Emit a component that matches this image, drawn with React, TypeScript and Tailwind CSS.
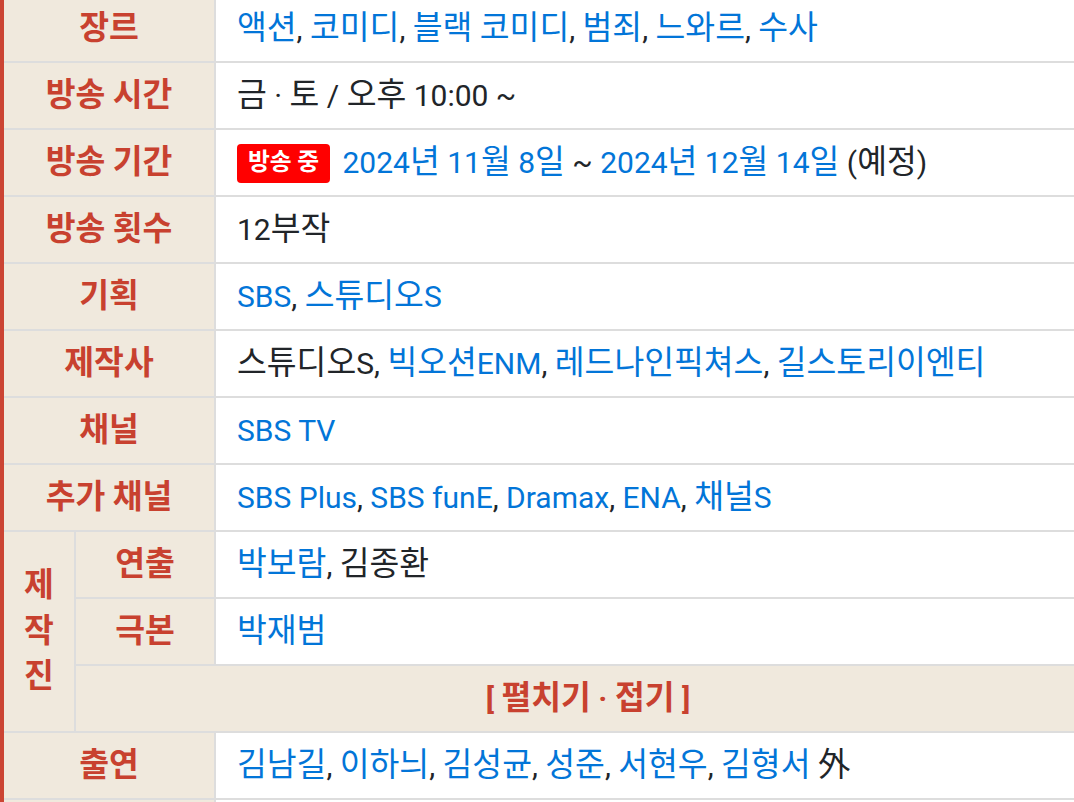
import React from "react";

function K({ t }: { t: string }) {
  const parts = t.split(/([\uAC00-\uD7A3\u3131-\u318E\u4E00-\u9FFF]+)/);
  return (
    <>
      {parts.map((p, i) =>
        i % 2 === 1 ? (
          <span key={i} className="text-[1.08em]">
            {p}
          </span>
        ) : (
          <React.Fragment key={i}>{p}</React.Fragment>
        )
      )}
    </>
  );
}

const B = ({ t }: { t: string }) => (
  <span className="text-[#0275d8]">
    <K t={t} />
  </span>
);

function LinkList({ items, tail }: { items: [string, boolean][]; tail?: string }) {
  return (
    <>
      {items.map(([t, link], i) => (
        <React.Fragment key={i}>
          {link ? <B t={t} /> : <K t={t} />}
          {i < items.length - 1 ? ", " : ""}
        </React.Fragment>
      ))}
      {tail ? <K t={tail} /> : null}
    </>
  );
}

const H = ({ t, span2 = true }: { t: string; span2?: boolean }) => (
  <div
    className={`${span2 ? "col-span-2" : ""} bg-[#f0e9dd] text-[#c8412f] font-bold flex items-center justify-center whitespace-nowrap`}
  >
    <div>
      <K t={t} />
    </div>
  </div>
);

const V = ({ children }: { children?: React.ReactNode }) => (
  <div className="bg-white text-[#212529] flex items-center pl-[21px] whitespace-nowrap overflow-hidden">
    <div>{children}</div>
  </div>
);

export default function App() {
  return (
    <div className="w-[1074px] h-[802px] overflow-hidden bg-white">
      <div
        className="-mt-[4px] w-[1100px] grid grid-cols-[70px_138px_1fr] auto-rows-[65px] gap-[2px] bg-[#dddddd] border-l-[4px] border-[#cb4433] text-[30px] leading-[1.5]"
        style={{ fontFamily: 'Roboto, "Noto Sans CJK KR", sans-serif' }}
      >
        <H t="장르" />
        <V>
          <LinkList
            items={[
              ["액션", true],
              ["코미디", true],
              ["블랙 코미디", true],
              ["범죄", true],
              ["느와르", true],
              ["수사", true],
            ]}
          />
        </V>

        <H t="방송 시간" />
        <V>
          <K t="금 · 토 / 오후 10:00 ~" />
        </V>

        <H t="방송 기간" />
        <V>
          <span className="inline-flex items-center align-middle h-[39px] px-[11px] mr-[5px] rounded-[4px] bg-[#ff0000] text-white font-bold text-[22px] relative -top-[2px]">
            <span>
              <K t="방송 중" />
            </span>
          </span>{" "}
          <B t="2024년 11월 8일" /> ~ <B t="2024년 12월 14일" /> <K t="(예정)" />
        </V>

        <H t="방송 횟수" />
        <V>
          <K t="12부작" />
        </V>

        <H t="기획" />
        <V>
          <LinkList
            items={[
              ["SBS", true],
              ["스튜디오S", true],
            ]}
          />
        </V>

        <H t="제작사" />
        <V>
          <LinkList
            items={[
              ["스튜디오S", false],
              ["빅오션ENM", true],
              ["레드나인픽쳐스", true],
              ["길스토리이엔티", true],
            ]}
          />
        </V>

        <H t="채널" />
        <V>
          <B t="SBS TV" />
        </V>

        <H t="추가 채널" />
        <V>
          <LinkList
            items={[
              ["SBS Plus", true],
              ["SBS funE", true],
              ["Dramax", true],
              ["ENA", true],
              ["채널S", true],
            ]}
          />
        </V>

        <div className="row-span-3 bg-[#f0e9dd] text-[#c8412f] font-bold flex flex-col items-center justify-center leading-[1.4]">
          <span>
            <K t="제" />
          </span>
          <span>
            <K t="작" />
          </span>
          <span>
            <K t="진" />
          </span>
        </div>
        <H t="연출" span2={false} />
        <V>
          <B t="박보람" />, <K t="김종환" />
        </V>
        <H t="극본" span2={false} />
        <V>
          <B t="박재범" />
        </V>
        <div className="col-span-2 bg-[#f0e9dd] text-[#c8412f] font-bold flex items-center justify-center whitespace-nowrap">
          <div>
            <K t="[ 펼치기 · 접기 ]" />
          </div>
        </div>

        <H t="출연" />
        <V>
          <LinkList
            items={[
              ["김남길", true],
              ["이하늬", true],
              ["김성균", true],
              ["성준", true],
              ["서현우", true],
              ["김형서", true],
            ]}
            tail=" 外"
          />
        </V>

        <H t=" " />
        <V> </V>
      </div>
    </div>
  );
}
